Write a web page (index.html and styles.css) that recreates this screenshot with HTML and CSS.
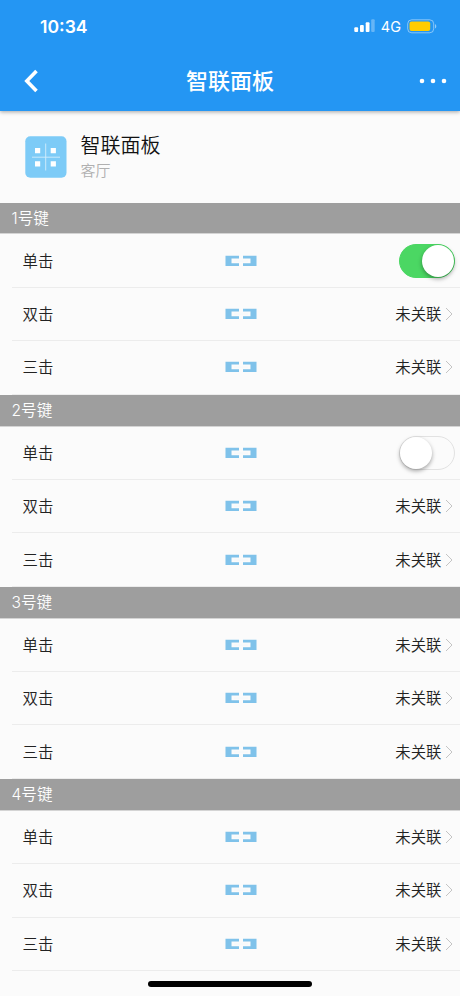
FILE: index.html
```html
<!DOCTYPE html>
<html lang="zh-CN">

<head>
  <meta charset="utf-8">
  <title>智联面板</title>
  <link rel="stylesheet" href="styles.css">
</head>

<body>
  <svg class="symbols">
    <symbol id="link" viewBox="0 0 32 12">
      <path d="M0.5 0.8h13.5v2.7h-7.5v4.8h7.5v2.7H0.5zM18 0.8h13.5v10.2H18V8.3h7.5V3.5H18z" fill="#7fc2ea" />
      <path d="M9 5.9h14" stroke="#f3f8fb" stroke-width="1" />
    </symbol>
    <symbol id="arrow" viewBox="0 0 8 14">
      <path d="M1 1l6 6-6 6" fill="none" stroke="#c4c4c4" stroke-width="1" />
    </symbol>
  </svg>

  <header class="header">
    <div class="status">
      <span class="time">10:34</span>
      <div class="status-right">
        <svg class="signal" width="21" height="14" viewBox="0 0 21 14" fill="#fff">
          <rect x="0.3" y="8.3" width="3.8" height="4.7" rx="1" />
          <rect x="6" y="6" width="3.8" height="7" rx="1" />
          <rect x="11.7" y="3.3" width="3.8" height="9.7" rx="1" />
          <rect x="17.2" y="0.3" width="3.5" height="12.7" rx="1" opacity="0.3" />
        </svg>
        <span class="network">4G</span>
        <svg class="battery" width="30" height="15" viewBox="0 0 30 15">
          <rect x="0.7" y="0.8" width="26" height="13" rx="4" fill="none" stroke="#fff" stroke-opacity="0.45" />
          <rect x="2.5" y="2.5" width="20.7" height="9.6" rx="2" fill="#ffcc00" />
          <path d="M28 5v4.6c1.8-.8 1.8-3.8 0-4.6z" fill="#fff" opacity="0.5" />
        </svg>
      </div>
    </div>
    <div class="nav">
      <svg class="back" width="14" height="24" viewBox="0 0 14 24">
        <path d="M12.5 2L2.8 12l9.7 10" fill="none" stroke="#fff" stroke-width="3.6" />
      </svg>
      <h1 class="title">智联面板</h1>
      <svg class="more" width="28" height="6" viewBox="0 0 28 6" fill="#fff">
        <circle cx="3" cy="3" r="2.3" />
        <circle cx="14" cy="3" r="2.3" />
        <circle cx="25" cy="3" r="2.3" />
      </svg>
    </div>
  </header>

  <div class="device">
    <svg class="device-icon" width="42" height="42" viewBox="0 0 42 42">
      <rect x="0.3" y="0.3" width="41.2" height="41.4" rx="5" fill="#7dcbf7" />
      <path d="M20.7 7.5v27M7 21.2h28" stroke="#d3edfc" stroke-width="0.9" />
      <path d="M10 12h5.2v5.2H10zM25.7 12h5.2v5.2h-5.2zM10 25.3h5.2v5.2H10zM25.7 25.3h5.2v5.2h-5.2z" fill="#fff" />
    </svg>
    <div class="device-text">
      <div class="device-name">智联面板</div>
      <div class="device-room">客厅</div>
    </div>
  </div>

  <div class="group">
    <h2 class="group-title">1号键</h2>
    <div class="row">
      <span class="label">单击</span>
      <svg class="link"><use href="#link" /></svg>
      <span class="switch on"></span>
    </div>
    <div class="row">
      <span class="label">双击</span>
      <svg class="link"><use href="#link" /></svg>
      <span class="value">未关联<svg class="arrow"><use href="#arrow" /></svg></span>
    </div>
    <div class="row">
      <span class="label">三击</span>
      <svg class="link"><use href="#link" /></svg>
      <span class="value">未关联<svg class="arrow"><use href="#arrow" /></svg></span>
    </div>
  </div>

  <div class="group">
    <h2 class="group-title">2号键</h2>
    <div class="row">
      <span class="label">单击</span>
      <svg class="link"><use href="#link" /></svg>
      <span class="switch"></span>
    </div>
    <div class="row">
      <span class="label">双击</span>
      <svg class="link"><use href="#link" /></svg>
      <span class="value">未关联<svg class="arrow"><use href="#arrow" /></svg></span>
    </div>
    <div class="row">
      <span class="label">三击</span>
      <svg class="link"><use href="#link" /></svg>
      <span class="value">未关联<svg class="arrow"><use href="#arrow" /></svg></span>
    </div>
  </div>

  <div class="group">
    <h2 class="group-title">3号键</h2>
    <div class="row">
      <span class="label">单击</span>
      <svg class="link"><use href="#link" /></svg>
      <span class="value">未关联<svg class="arrow"><use href="#arrow" /></svg></span>
    </div>
    <div class="row">
      <span class="label">双击</span>
      <svg class="link"><use href="#link" /></svg>
      <span class="value">未关联<svg class="arrow"><use href="#arrow" /></svg></span>
    </div>
    <div class="row">
      <span class="label">三击</span>
      <svg class="link"><use href="#link" /></svg>
      <span class="value">未关联<svg class="arrow"><use href="#arrow" /></svg></span>
    </div>
  </div>

  <div class="group">
    <h2 class="group-title">4号键</h2>
    <div class="row">
      <span class="label">单击</span>
      <svg class="link"><use href="#link" /></svg>
      <span class="value">未关联<svg class="arrow"><use href="#arrow" /></svg></span>
    </div>
    <div class="row">
      <span class="label">双击</span>
      <svg class="link"><use href="#link" /></svg>
      <span class="value">未关联<svg class="arrow"><use href="#arrow" /></svg></span>
    </div>
    <div class="row">
      <span class="label">三击</span>
      <svg class="link"><use href="#link" /></svg>
      <span class="value">未关联<svg class="arrow"><use href="#arrow" /></svg></span>
    </div>
  </div>

  <div class="home-bar"></div>
</body>

</html>
```
FILE: styles.css
```css
* {
  box-sizing: border-box;
}
body {
  margin: 0;
  height: 996px;
  overflow: hidden;
  background-color: #fbfbfb;
  color: #222;
  font-family: Inter, "Noto Sans CJK SC", sans-serif;
  font-weight: 350;
}
svg {
  display: block;
  flex: none;
}
.symbols {
  width: 0;
  height: 0;
}

/* header */
.header {
  height: 111px;
  color: #fff;
  background-color: #2496f3;
  box-shadow: 0 1px 4px rgba(0, 0, 0, 0.35);
}
.status {
  display: flex;
  justify-content: space-between;
  align-items: center;
  height: 50px;
  padding: 2px 23px 0 40px;
}
.time {
  font-size: 17.6px;
  font-weight: 600;
}
.status-right {
  display: flex;
  align-items: center;
}
.network {
  margin: 0 6px 0 6px;
  font-size: 14.5px;
  font-weight: 400;
}
.nav {
  display: grid;
  grid-template-columns: 1fr auto 1fr;
  align-items: center;
  height: 61px;
  padding: 0 13px 0 25px;
}
.title {
  margin: 0 0 0 -12px;
  font-size: 22px;
  font-weight: 500;
  line-height: 30px;
}
.back {
  margin-left: -1px;
}
.more {
  justify-self: end;
}

/* device */
.device {
  display: flex;
  align-items: center;
  gap: 14px;
  height: 91.6px;
  padding-left: 24.5px;
}
.device-text {
  padding-top: 2px;
}
.device-name {
  color: #111;
  font-size: 20px;
  line-height: 27px;
}
.device-room {
  color: #b0b0b0;
  font-size: 15px;
  line-height: 22px;
}

/* keys */
.group-title {
  height: 31.8px;
  margin: 0;
  padding-left: 11.5px;
  color: #fff;
  background-color: #9e9e9e;
  border-bottom: 1px solid #d4d4d4;
  font-size: 15.6px;
  font-weight: 350;
  line-height: 31px;
}
.row {
  display: grid;
  grid-template-columns: 1fr 32px 1fr;
  align-items: center;
  height: 53.45px;
  margin-left: 12px;
  padding: 0 5px 0 10.5px;
  border-bottom: 1px solid #ececec;
  font-size: 15.4px;
}
.label {
  padding-bottom: 2px;
}
.link {
  width: 32px;
  height: 12px;
  margin-left: 2px;
}
.value {
  display: flex;
  align-items: center;
  justify-self: end;
  gap: 3.5px;
  padding: 0 2px 2px 0;
}
.arrow {
  width: 8px;
  height: 14px;
  margin-top: 2px;
}

/* switch */
.switch {
  justify-self: end;
  display: flex;
  align-items: center;
  width: 56px;
  height: 34px;
  border: 1px solid #e2e2e2;
  border-radius: 17px;
}
.switch::after {
  content: "";
  width: 32px;
  height: 32px;
  border-radius: 50%;
  background-color: #fff;
  box-shadow: 0 2px 4px rgba(0, 0, 0, 0.35);
}
.switch.on {
  justify-content: flex-end;
  background-color: #4bd763;
  border-color: #4bd763;
}

.home-bar {
  position: absolute;
  left: 148px;
  bottom: 9px;
  width: 164px;
  height: 6px;
  border-radius: 3px;
  background-color: #000;
}
```
